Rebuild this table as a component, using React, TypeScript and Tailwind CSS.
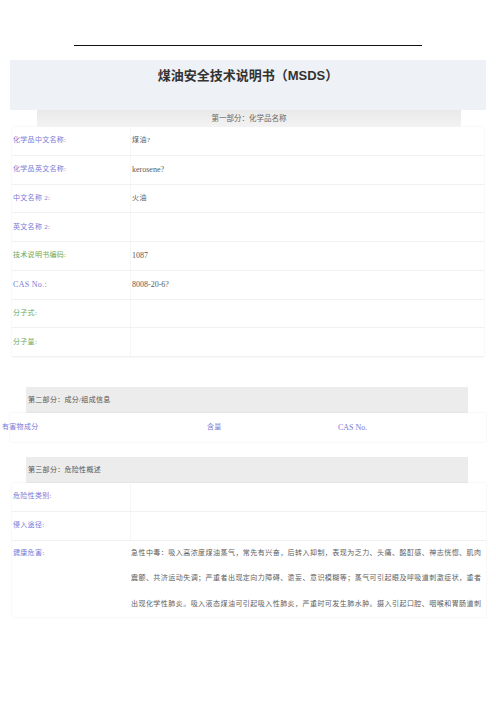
import React from "react";

const serif = { fontFamily: '"Liberation Serif", "Noto Sans CJK SC", serif' };

const BLUE = "text-[#7a7ad6]";
const GREEN = "text-[#6fa856]";

function Row({ label, value, color, latin }: { label: string; value?: string; color: string; latin?: boolean }) {
  return (
    <div className="flex h-[28.75px] items-center border-b border-[#f1f1f1]">
      <div className={`w-[119px] h-full flex items-center pl-[1px] border-r border-[#f6f6f6] tracking-[0.3px] ${color}`}>{label}</div>
      <div className={`pl-[1px] text-[#5a5a5a] ${latin ? "text-[8px]" : "tracking-[0.5px]"}`}>{value}</div>
    </div>
  );
}

export default function App() {
  return (
    <div className="w-[496px] h-[702px] bg-white pt-[45px] text-[7px] leading-none" style={serif}>
      <div className="ml-[74px] w-[348px] h-px bg-[#111]" />
      <div className="mt-[14px] mx-[10px] h-[50px] bg-[#eef1f5] flex justify-center pt-[9px]">
        <div
          className="text-[13px] leading-[14px] font-bold text-[#333]"
          style={{ fontFamily: '"Liberation Sans", "Noto Sans CJK SC", sans-serif' }}
        >
          煤油安全技术说明书（MSDS）
        </div>
      </div>
      <div className="mx-[10px] h-[17px] flex">
        <div className="ml-[27px] mr-[25px] flex-1 bg-gradient-to-b from-[#e9e9e9] to-[#f3f3f3] flex items-center justify-center text-[7.5px] text-[#666]">
          第一部分：化学品名称
        </div>
      </div>
      <div className="mx-[12px] shadow-[0_0_2px_rgba(0,0,0,0.08)]">
        <Row label="化学品中文名称:" value="煤油?" color={BLUE} />
        <Row label="化学品英文名称:" value="kerosene?" color={BLUE} latin />
        <Row label="中文名称 2:" value="火油" color={BLUE} />
        <Row label="英文名称 2:" color={BLUE} />
        <Row label="技术说明书编码:" value="1087" color={GREEN} latin />
        <Row label={"CAS No.:"} value="8008-20-6?" color={`${BLUE} text-[8px]`} latin />
        <Row label="分子式:" color={GREEN} />
        <Row label="分子量:" color={GREEN} />
      </div>

      <div className="mt-[30px] ml-[26px] mr-[28px] h-[26px] bg-[#ececec] flex items-center pl-[2px] text-[#555] tracking-[0.3px]">
        第二部分：成分/组成信息
      </div>
      <div className="relative mx-[10px] h-[29px] shadow-[0_0_2px_rgba(0,0,0,0.08)] flex items-center">
        <div className={`absolute left-[-8px] tracking-[0.3px] ${BLUE}`}>有害物成分</div>
        <div className={`absolute left-[197px] tracking-[0.3px] ${BLUE}`}>含量</div>
        <div className={`absolute left-[328px] text-[8px] ${BLUE}`}>CAS No.</div>
      </div>

      <div className="mt-[15px] ml-[26px] mr-[28px] h-[26px] bg-[#ececec] flex items-center pl-[2px] text-[#555] tracking-[0.3px]">
        第三部分：危险性概述
      </div>
      <div className="mx-[12px] mr-[10px] shadow-[0_0_2px_rgba(0,0,0,0.08)]">
        <Row label="危险性类别:" color={BLUE} />
        <Row label="侵入途径:" color={BLUE} />
        <div className="flex">
          <div className={`w-[119px] pl-[1px] leading-[25.5px] tracking-[0.3px] ${BLUE}`}>健康危害:</div>
          <div className="w-[350px] text-[#5e5e5e] leading-[25.5px]">
            <div className="[text-align-last:justify] text-justify">急性中毒：吸入高浓度煤油蒸气，常先有兴奋，后转入抑制，表现为乏力、头痛、酩酊感、神志恍惚、肌肉</div>
            <div className="[text-align-last:justify] text-justify">震颤、共济运动失调；严重者出现定向力障碍、谵妄、意识模糊等；蒸气可引起眼及呼吸道刺激症状，重者</div>
            <div className="[text-align-last:justify] text-justify">出现化学性肺炎。吸入液态煤油可引起吸入性肺炎，严重时可发生肺水肿。摄入引起口腔、咽喉和胃肠道刺</div>
          </div>
        </div>
      </div>
    </div>
  );
}
